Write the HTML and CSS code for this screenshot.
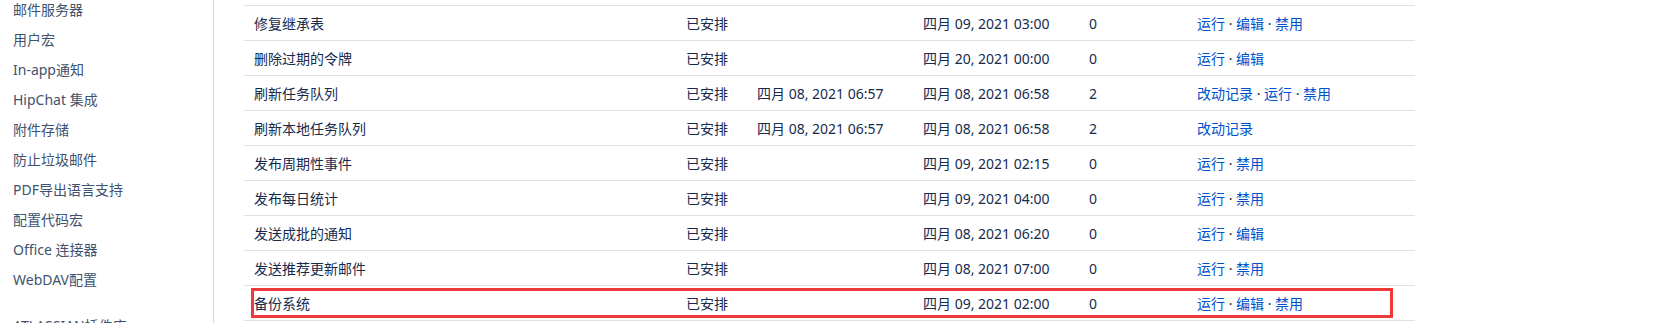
FILE: index.html
```html
<!DOCTYPE html>
<html lang="zh-CN">
<head>
<meta charset="utf-8">
<title>计划任务</title>
<link rel="stylesheet" href="styles.css">
</head>
<body>
<div class="page">
  <nav class="sidebar">
    <ul class="nav-list">
      <li>邮件服务器</li>
      <li>用户宏</li>
      <li>In-app通知</li>
      <li>HipChat 集成</li>
      <li>附件存储</li>
      <li>防止垃圾邮件</li>
      <li>PDF导出语言支持</li>
      <li>配置代码宏</li>
      <li>Office 连接器</li>
      <li>WebDAV配置</li>
    </ul>
    <div class="nav-heading">ATLASSIAN插件库</div>
  </nav>
  <main class="main">
    <div class="jobs">
      <div class="row">
        <div class="cell">修复继承表</div><div class="cell">已安排</div><div class="cell"></div><div class="cell">四月 09, 2021 03:00</div><div class="cell">0</div>
        <div class="cell actions"><a>运行</a> · <a>编辑</a> · <a>禁用</a></div>
      </div>
      <div class="row">
        <div class="cell">删除过期的令牌</div><div class="cell">已安排</div><div class="cell"></div><div class="cell">四月 20, 2021 00:00</div><div class="cell">0</div>
        <div class="cell actions"><a>运行</a> · <a>编辑</a></div>
      </div>
      <div class="row">
        <div class="cell">刷新任务队列</div><div class="cell">已安排</div><div class="cell">四月 08, 2021 06:57</div><div class="cell">四月 08, 2021 06:58</div><div class="cell">2</div>
        <div class="cell actions"><a>改动记录</a> · <a>运行</a> · <a>禁用</a></div>
      </div>
      <div class="row">
        <div class="cell">刷新本地任务队列</div><div class="cell">已安排</div><div class="cell">四月 08, 2021 06:57</div><div class="cell">四月 08, 2021 06:58</div><div class="cell">2</div>
        <div class="cell actions"><a>改动记录</a></div>
      </div>
      <div class="row">
        <div class="cell">发布周期性事件</div><div class="cell">已安排</div><div class="cell"></div><div class="cell">四月 09, 2021 02:15</div><div class="cell">0</div>
        <div class="cell actions"><a>运行</a> · <a>禁用</a></div>
      </div>
      <div class="row">
        <div class="cell">发布每日统计</div><div class="cell">已安排</div><div class="cell"></div><div class="cell">四月 09, 2021 04:00</div><div class="cell">0</div>
        <div class="cell actions"><a>运行</a> · <a>禁用</a></div>
      </div>
      <div class="row">
        <div class="cell">发送成批的通知</div><div class="cell">已安排</div><div class="cell"></div><div class="cell">四月 08, 2021 06:20</div><div class="cell">0</div>
        <div class="cell actions"><a>运行</a> · <a>编辑</a></div>
      </div>
      <div class="row">
        <div class="cell">发送推荐更新邮件</div><div class="cell">已安排</div><div class="cell"></div><div class="cell">四月 08, 2021 07:00</div><div class="cell">0</div>
        <div class="cell actions"><a>运行</a> · <a>禁用</a></div>
      </div>
      <div class="row">
        <div class="cell">备份系统</div><div class="cell">已安排</div><div class="cell"></div><div class="cell">四月 09, 2021 02:00</div><div class="cell">0</div>
        <div class="cell actions"><a>运行</a> · <a>编辑</a> · <a>禁用</a></div>
      </div>
      <div class="highlight"></div>
    </div>
  </main>
</div>
</body>
</html>
```
FILE: styles.css
```css
html, body {
  margin: 0;
  padding: 0;
  background: #ffffff;
  overflow: hidden;
}
body {
  font-family: "Noto Sans", "Noto Sans CJK SC", sans-serif;
  font-size: 14px;
  color: #172b4d;
}
.page {
  display: flex;
  height: 323px;
  overflow: hidden;
}
.sidebar {
  flex: none;
  width: 214px;
  border-right: 1px solid #d4d4d4;
  padding-left: 13px;
  box-sizing: border-box;
}
.nav-list {
  list-style: none;
  margin: -5px 0 0 0;
  padding: 0;
}
.nav-list li {
  height: 30px;
  line-height: 30px;
  color: #42526e;
  white-space: nowrap;
}
.nav-heading {
  margin-top: 21px;
  font-size: 14px;
  color: #42526e;
  line-height: 20px;
  white-space: nowrap;
}
.main {
  padding-left: 30px;
  flex: none;
}
.jobs {
  position: relative;
  width: 1171px;
  margin-top: 5px;
  border-top: 1px solid #dfe1e6;
}
.row {
  display: grid;
  grid-template-columns: 432px 71px 166px 166px 108px 1fr;
  height: 35px;
  box-sizing: border-box;
  border-bottom: 1px solid #dfe1e6;
  align-items: center;
}
.cell {
  padding-left: 10px;
  white-space: nowrap;
}
.actions {
  color: #172b4d;
}
.actions a {
  color: #0052cc;
  text-decoration: none;
}
.highlight {
  position: absolute;
  left: 7px;
  top: 282px;
  width: 1142px;
  height: 30px;
  box-sizing: border-box;
  border: 3px solid #f03a3a;
}
```
